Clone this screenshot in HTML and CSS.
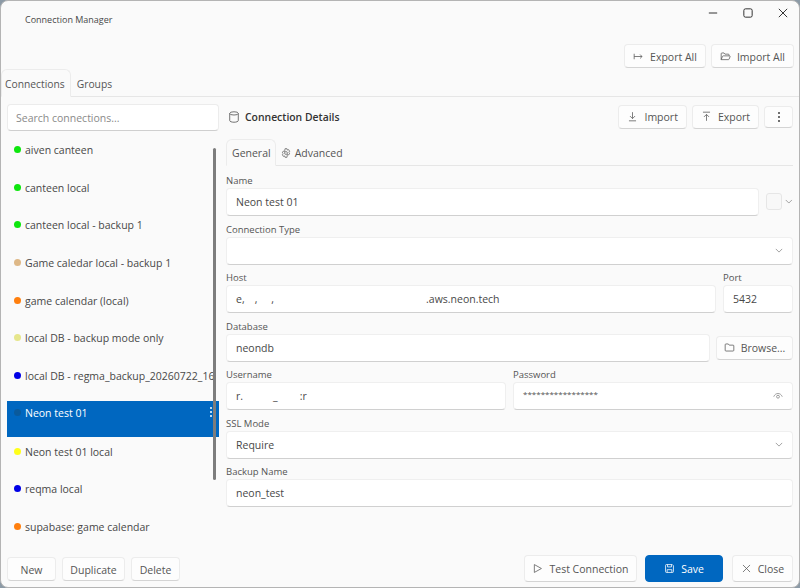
FILE: index.html
```html
<!DOCTYPE html>
<html lang="en">
<head>
  <meta charset="UTF-8">
  <title>Connection Manager</title>
  <link rel="stylesheet" href="styles.css">
</head>
<body>
  <div class="window">
    <div class="titlebar">
      <span class="title">Connection Manager</span>
      <div class="winControls">
        <svg class="winIcon" viewBox="0 0 12 12"><path d="M1 6h10"/></svg>
        <svg class="winIcon" viewBox="0 0 12 12"><rect x="1" y="1" width="10" height="10" rx="2"/></svg>
        <svg class="winIcon" viewBox="0 0 12 12"><path d="M1 1l10 10M11 1L1 11"/></svg>
      </div>
    </div>

    <div class="topActions">
      <button class="btn">
        <svg class="icon" viewBox="0 0 14 14"><path d="M1.500 3.500v7M1.500 7h10M9 4.500L11.500 7 9 9.500"/></svg>Export All
      </button>
      <button class="btn">
        <svg class="icon" viewBox="0 0 14 14"><path d="M1.500 11V3.500a1 1 0 0 1 1-1h2.600l1.200 1.500h4.200a1 1 0 0 1 1 1V6M1.500 11l1.700-4.200a1 1 0 0 1 .9-.6h8a.8.8 0 0 1 .7 1.100l-1.200 3a1 1 0 0 1-.9.7z"/></svg>Import All
      </button>
    </div>

    <div class="mainTabs">
      <div class="tab tabActive">Connections</div>
      <div class="tab">Groups</div>
    </div>

    <div class="panes">
      <div class="sidebar">
        <input class="search" type="text" placeholder="Search connections...">
        <div class="connList">
          <div class="conn"><span class="dot green"></span><span class="connName">aiven canteen</span></div>
          <div class="conn"><span class="dot green"></span><span class="connName">canteen local</span></div>
          <div class="conn"><span class="dot green"></span><span class="connName">canteen local - backup 1</span></div>
          <div class="conn"><span class="dot tan"></span><span class="connName">Game caledar local - backup 1</span></div>
          <div class="conn"><span class="dot orange"></span><span class="connName">game calendar (local)</span></div>
          <div class="conn"><span class="dot khaki"></span><span class="connName">local DB - backup mode only</span></div>
          <div class="conn"><span class="dot blue"></span><span class="connName">local DB - regma_backup_20260722_16</span></div>
          <div class="conn connSelected">
            <span class="dot navy"></span><span class="connName">Neon test 01</span>
            <svg class="connMenu" viewBox="0 0 4 12"><circle cx="2" cy="2" r="1"/><circle cx="2" cy="6" r="1"/><circle cx="2" cy="10" r="1"/></svg>
          </div>
          <div class="conn"><span class="dot yellow"></span><span class="connName">Neon test 01 local</span></div>
          <div class="conn"><span class="dot blue"></span><span class="connName">reqma local</span></div>
          <div class="conn"><span class="dot orange"></span><span class="connName">supabase: game calendar</span></div>
          <div class="scrollThumb"></div>
        </div>
        <div class="sideActions">
          <button class="btn btnSide">New</button>
          <button class="btn btnSide">Duplicate</button>
          <button class="btn btnSide">Delete</button>
        </div>
      </div>

      <div class="details">
        <div class="detailsHead">
          <svg class="icon headIcon" viewBox="0 0 14 14"><ellipse cx="7" cy="2.800" rx="5" ry="1.900"/><path d="M2 2.800v8.400c0 1 2.200 1.900 5 1.900s5-.9 5-1.900V2.800"/></svg>
          <span class="detailsTitle">Connection Details</span>
          <div class="headActions">
            <button class="btn">
              <svg class="icon" viewBox="0 0 14 14"><path d="M7 1.500v8M3.800 6.500L7 9.700l3.200-3.200M2.500 12.500h9"/></svg>Import
            </button>
            <button class="btn">
              <svg class="icon" viewBox="0 0 14 14"><path d="M2.500 1.500h9M7 12.500v-8M3.800 7.500L7 4.300l3.200 3.200"/></svg>Export
            </button>
            <button class="btn btnMore">
              <svg class="moreIcon" viewBox="0 0 4 12"><circle cx="2" cy="2" r="1"/><circle cx="2" cy="6" r="1"/><circle cx="2" cy="10" r="1"/></svg>
            </button>
          </div>
        </div>

        <div class="subTabs">
          <div class="tab subTab tabActive">General</div>
          <div class="tab subTab">
            <svg class="icon gear" viewBox="0 0 14 14"><path d="M5.600 1h2.800l.5 1.900 1.900-.6 1.400 2.400-1.400 1.300 1.400 1.300-1.400 2.400-1.900-.6L8.400 13H5.600l-.5-1.900-1.900.6-1.400-2.400L3.200 8 1.800 6.700l1.400-2.400 1.900.6z"/><circle cx="7" cy="7" r="2"/></svg>Advanced
          </div>
        </div>

        <div class="form">
          <div class="row">
            <div class="field grow">
              <label>Name</label>
              <div class="input">Neon test 01</div>
            </div>
            <div class="colorPick">
              <span class="swatch"></span>
              <svg class="chevron" viewBox="0 0 10 6"><path d="M1 1l4 4 4-4"/></svg>
            </div>
          </div>
          <div class="field">
            <label>Connection Type</label>
            <div class="input select"><svg class="chevron" viewBox="0 0 10 6"><path d="M1 1l4 4 4-4"/></svg></div>
          </div>
          <div class="row rowPort">
            <div class="field grow">
              <label>Host</label>
              <div class="input">e,<span class="gapA"></span>,<span class="gapB"></span>,<span class="gapL"></span>.aws.neon.tech</div>
            </div>
            <div class="field portField">
              <label>Port</label>
              <div class="input">5432</div>
            </div>
          </div>
          <div class="row rowBrowse">
            <div class="field grow">
              <label>Database</label>
              <div class="input">neondb</div>
            </div>
            <button class="btn btnBrowse">
              <svg class="icon" viewBox="0 0 14 14"><path d="M1.500 3.500a1 1 0 0 1 1-1h3l1.200 1.500h4.800a1 1 0 0 1 1 1v5.500a1 1 0 0 1-1 1h-9a1 1 0 0 1-1-1z"/></svg>Browse...
            </button>
          </div>
          <div class="row rowCreds">
            <div class="field half">
              <label>Username</label>
              <div class="input">r.<span class="gapU"></span>_<span class="gapV"></span>:r</div>
            </div>
            <div class="field half">
              <label>Password</label>
              <div class="input password">
                <span class="stars">*****************</span>
                <svg class="eye" viewBox="0 0 14 10"><path d="M1 6c1.300-3 3.500-4.500 6-4.500S11.700 3 13 6"/><circle cx="7" cy="6" r="2"/></svg>
              </div>
            </div>
          </div>
          <div class="field">
            <label>SSL Mode</label>
            <div class="input select">Require<svg class="chevron" viewBox="0 0 10 6"><path d="M1 1l4 4 4-4"/></svg></div>
          </div>
          <div class="field">
            <label>Backup Name</label>
            <div class="input">neon_test</div>
          </div>
        </div>

        <div class="footer">
          <button class="btn btnFoot btnTest">
            <svg class="icon" viewBox="0 0 14 14"><path d="M3 2l9 5-9 5z"/></svg>Test Connection
          </button>
          <button class="btn btnFoot btnPrimary">
            <svg class="icon" viewBox="0 0 14 14"><path d="M2 3a1 1 0 0 1 1-1h7.500L12 3.500V11a1 1 0 0 1-1 1H3a1 1 0 0 1-1-1z"/><path d="M4.500 2v3h5V2M4 12V8.500h6V12"/></svg>Save
          </button>
          <button class="btn btnFoot btnClose">
            <svg class="icon" viewBox="0 0 14 14"><path d="M2.500 2.500l9 9M11.500 2.500l-9 9"/></svg>Close
          </button>
        </div>
      </div>
    </div>
  </div>
</body>
</html>
```

FILE: styles.css
```css
* {
  box-sizing: border-box;
}

html, body {
  height: 100%;
}

body {
  margin: 0;
  background-color: #8c9aa6;
  font-family: 'Open Sans', 'Noto Sans', Arial, sans-serif;
  font-size: 10.5px;
  color: #484848;
  overflow: hidden;
}

.window {
  display: flex;
  flex-direction: column;
  width: 800px;
  height: 588px;
  background: #fafafa;
  border: 1px solid #b4b4b4;
  border-radius: 8px;
  overflow: hidden;
}

.titlebar {
  display: flex;
  align-items: center;
  justify-content: space-between;
  flex: none;
  height: 37px;
  padding: 0 11px 0 24px;
}

.title {
  font-size: 9px;
}

.winControls {
  display: flex;
  gap: 25px;
  margin-top: -13px;
}

.winIcon {
  width: 10px;
  height: 10px;
  fill: none;
  stroke: #222;
  stroke-width: 1.100;
}

.topActions {
  display: flex;
  justify-content: flex-end;
  gap: 5px;
  flex: none;
  height: 31px;
  padding: 6px 5px 0 0;
}

.topActions .btn {
  padding-top: 1px;
}

.btn {
  display: inline-flex;
  align-items: center;
  justify-content: center;
  gap: 6px;
  height: 24px;
  padding: 0 8px;
  font-family: inherit;
  font-size: 10.5px;
  color: #555;
  background: #fdfdfd;
  border: 1px solid #ececec;
  border-bottom-color: #d4d4d4;
  border-radius: 4px;
}

.icon {
  flex: none;
  width: 11px;
  height: 11px;
  fill: none;
  stroke: #5c5c5c;
  stroke-width: 1;
}

.mainTabs {
  display: flex;
  flex: none;
  height: 28px;
  border-bottom: 1px solid #e6e6e6;
}

.tab {
  display: flex;
  align-items: center;
  gap: 4px;
  padding: 0 5px;
  margin-bottom: -1px;
  font-size: 10.5px;
  color: #555;
  border: 1px solid transparent;
  border-radius: 6px 6px 0 0;
}

.mainTabs .tab {
  padding-top: 1px;
  font-size: 10.300px;
}

.mainTabs .tabActive {
  padding-left: 3px;
}

.tabActive {
  background: #fafafa;
  border-color: #ececec;
  border-bottom-color: #fafafa;
}

.panes {
  display: flex;
  flex: 1;
  min-height: 0;
}

.sidebar {
  display: flex;
  flex-direction: column;
  flex: none;
  width: 225px;
  padding: 7px 0 6px 6px;
}

.search {
  flex: none;
  width: 212px;
  height: 27px;
  padding: 1px 8px 0;
  font-family: inherit;
  font-size: 10.5px;
  background: #fff;
  border: 1px solid #ececec;
  border-bottom-color: #cfcfcf;
  border-radius: 4px;
  outline: none;
}

.search::placeholder {
  color: #8a8a8a;
}

.connList {
  position: relative;
  flex: 1;
  width: 212px;
  padding-top: 5px;
  overflow: hidden;
}

.conn {
  display: flex;
  align-items: flex-start;
  height: 37.700px;
  padding: 6px 0 0 7px;
  white-space: nowrap;
  font-size: 10.5px;
}

.connName {
  line-height: 16px;
}

.dot {
  flex: none;
  width: 7px;
  height: 7px;
  margin: 4px 4px 0 0;
  border-radius: 50%;
}

.green { background: #0ee60e; }
.tan { background: #deb887; }
.orange { background: #ff7f0e; }
.khaki { background: #e6e68c; }
.blue { background: #0000e6; }
.yellow { background: #ffff1a; }
.navy { background: #0a5a9c; }

.connSelected {
  position: relative;
  height: 36px;
  margin: 1px 0 0.700px;
  padding-top: 4px;
  background: #0067c0;
  color: #fff;
}

.connMenu {
  position: absolute;
  top: 5px;
  right: 6px;
  width: 4px;
  height: 12px;
  fill: #fff;
}

.scrollThumb {
  position: absolute;
  top: 17px;
  right: 3px;
  width: 3px;
  height: 332px;
  background: #7d7d7d;
  border-radius: 2px;
}

.sideActions {
  display: flex;
  gap: 6px;
  flex: none;
}

.btnSide {
  width: 49px;
  padding: 1px 0 0;
}

.btnSide:nth-child(2) {
  width: 63px;
}

.details {
  display: flex;
  flex-direction: column;
  flex: 1;
  min-width: 0;
  padding: 7px 6px 5px 0;
}

.detailsHead {
  display: flex;
  align-items: center;
  flex: none;
  height: 25px;
  padding-left: 2px;
}

.headIcon {
  width: 12px;
  height: 12px;
  margin-right: 5px;
}

.detailsTitle {
  font-size: 10.400px;
  font-weight: 600;
  color: #333;
}

.headActions {
  display: flex;
  align-items: center;
  gap: 5px;
  margin-left: auto;
}

.btnMore {
  width: 29px;
  height: 22px;
  padding: 0;
}

.moreIcon {
  width: 4px;
  height: 12px;
  fill: #404040;
}

.subTabs {
  display: flex;
  flex: none;
  height: 27px;
  margin-top: 10px;
  border-bottom: 1px solid #e6e6e6;
}

.gear {
  width: 10px;
  height: 10px;
}

.subTab.tabActive {
  padding-right: 4px;
}

.subTab:last-child {
  padding-left: 4px;
}

.form {
  display: flex;
  flex-direction: column;
  flex: 1;
  gap: 5.500px;
  padding-top: 7px;
}

.field {
  display: flex;
  flex-direction: column;
}

.field label {
  height: 15px;
  font-size: 9.500px;
  line-height: 15px;
  color: #555;
}

.grow {
  flex: 1;
  min-width: 0;
}

.row {
  display: flex;
}

.rowPort {
  gap: 7px;
}

.portField {
  width: 70px;
}

.rowBrowse {
  gap: 6px;
  align-items: flex-end;
}

.rowCreds {
  gap: 7px;
}

.half {
  flex: 1;
  min-width: 0;
}

.input {
  display: flex;
  align-items: center;
  height: 28px;
  padding: 0 9px;
  font-size: 10.500px;
  white-space: nowrap;
  background: #fff;
  border: 1px solid #efefef;
  border-bottom-color: #d0d0d0;
  border-radius: 4px;
}

.gapA {
  width: 10px;
}

.gapB {
  width: 14px;
}

.gapL {
  width: 152px;
}

.gapU {
  width: 30px;
}

.gapV {
  width: 22px;
}

.select,
.password {
  justify-content: space-between;
  padding-right: 9px;
}

.chevron {
  width: 8px;
  height: 5px;
  fill: none;
  stroke: #8c8c8c;
  stroke-width: 1;
}

.select .chevron {
  margin-left: auto;
}

.colorPick {
  display: flex;
  align-items: center;
  gap: 3px;
  width: 34px;
  padding: 14px 0 0 7px;
}

.swatch {
  width: 17px;
  height: 17px;
  background: #f8f8f8;
  border: 1px solid #e6e6e6;
  border-radius: 3px;
}

.btnBrowse {
  width: 77px;
  height: 24px;
  margin-bottom: 2px;
  padding: 0;
}

.stars {
  margin-bottom: 5px;
  font-size: 8px;
  color: #505050;
}

.eye {
  width: 10px;
  height: 8px;
  fill: none;
  stroke: #7a7a7a;
  stroke-width: 1;
}

.footer {
  display: flex;
  justify-content: flex-end;
  gap: 8px;
  flex: none;
}

.btnFoot {
  height: 27px;
  padding: 0;
}

.btnTest {
  width: 113px;
}

.btnClose {
  width: 61px;
  margin-left: 1px;
}

.btnPrimary {
  width: 78px;
  color: #fff;
  background: #0067c0;
  border-color: #0067c0;
}

.btnPrimary .icon {
  stroke: #fff;
}
```
